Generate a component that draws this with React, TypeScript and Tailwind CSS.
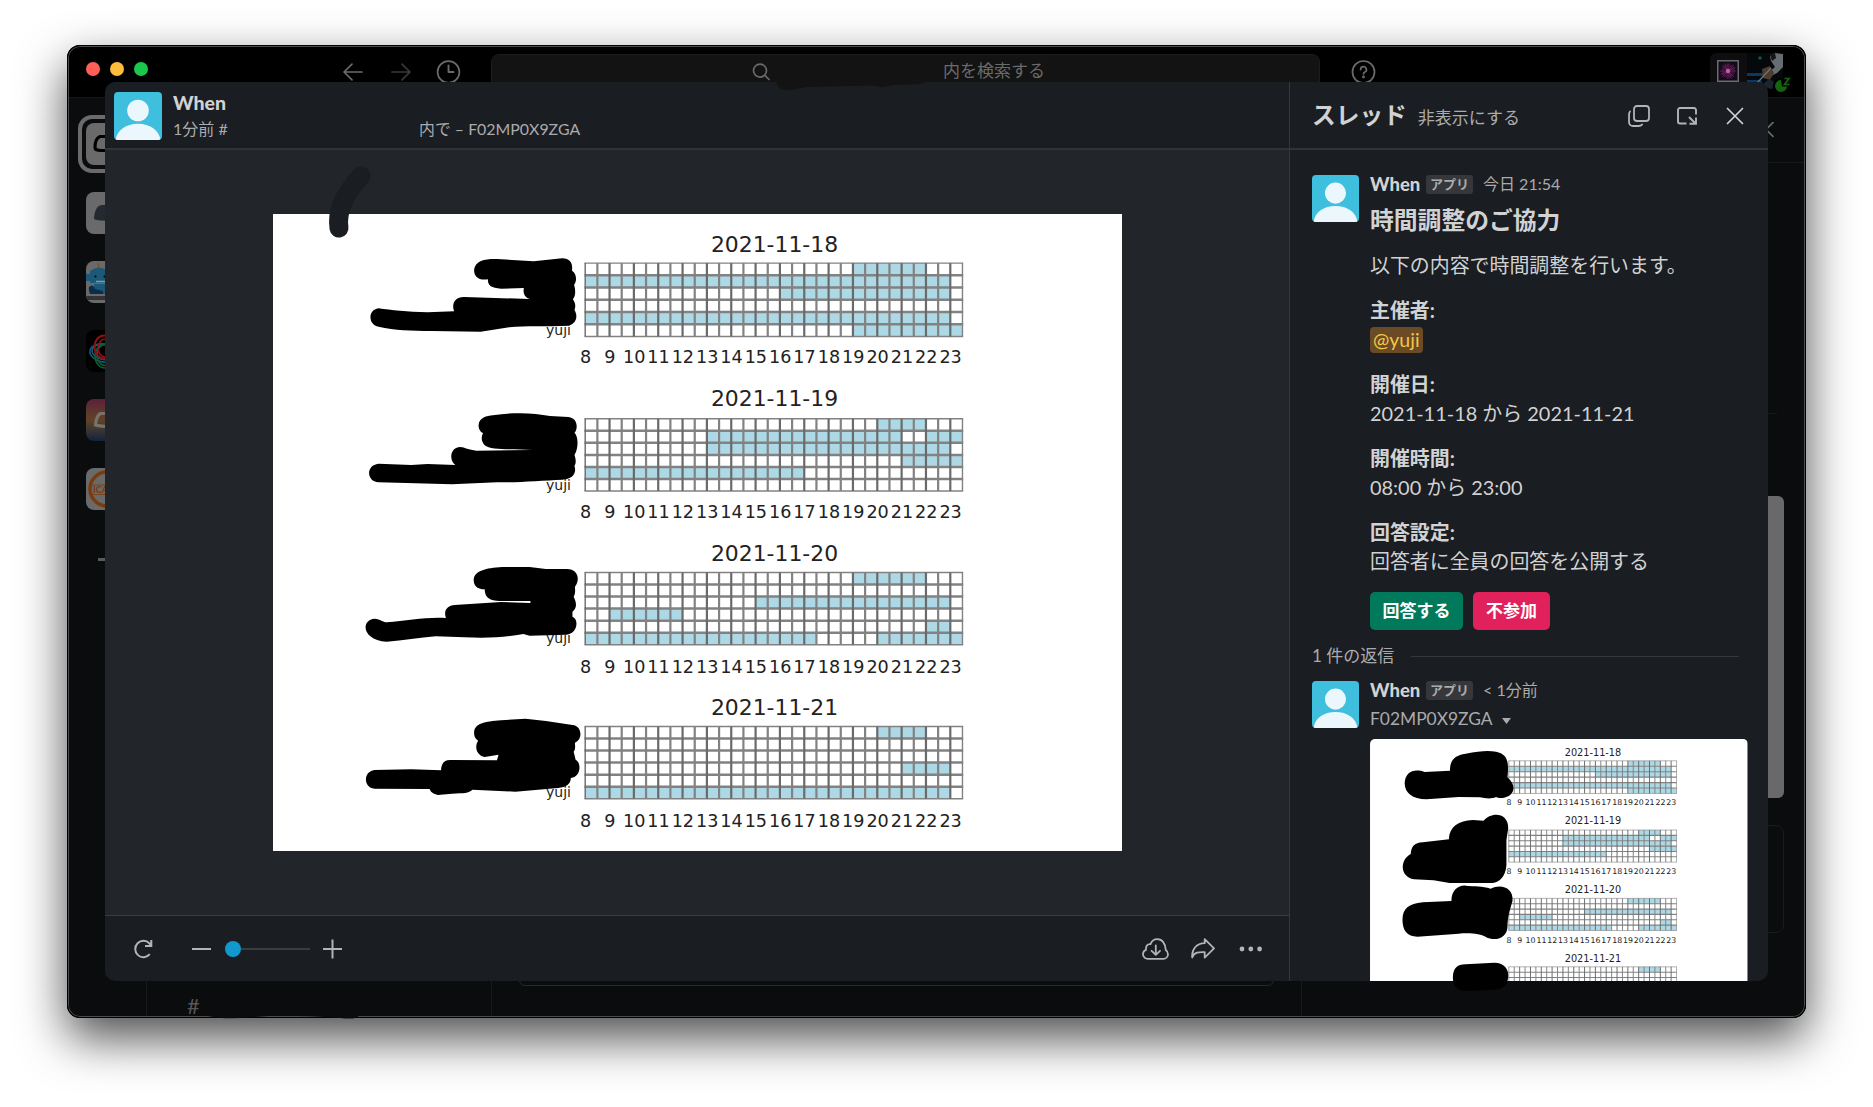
import React from "react";

type Range = [row: number, from: number, to: number];
interface Day {
  date: string;
  top: number;
  height: number;
  title: number;
  ticks: number;
  busy: Range[];
}

const COLS = 31;
const GRID_X = 312.2;
const CELL_W = 12.17;

const days: Day[] = [
  { date: "2021-11-18", top: 49.1, height: 73.4, title: 38.3, ticks: 149.3, busy: [[0, 22, 28], [1, 0, 30], [2, 16, 30], [4, 0, 30], [5, 22, 31]] },
  { date: "2021-11-19", top: 204.8, height: 72.2, title: 192.1, ticks: 304, busy: [[0, 24, 28], [1, 10, 26], [1, 28, 31], [2, 10, 30], [3, 26, 31], [4, 0, 18]] },
  { date: "2021-11-20", top: 358.5, height: 72.2, title: 347.2, ticks: 458.8, busy: [[0, 22, 28], [2, 14, 30], [3, 2, 8], [4, 28, 30], [5, 0, 19], [5, 24, 31]] },
  { date: "2021-11-21", top: 512.5, height: 72.2, title: 501.4, ticks: 612.8, busy: [[0, 24, 28], [3, 26, 30], [5, 0, 30]] },
];

function ScheduleChart({ className }: { className: string }) {
  const right = GRID_X + COLS * CELL_W;
  return (
    <svg viewBox="0 0 849 637" className={className} fontFamily='"DejaVu Sans", sans-serif'>
      <rect width="849" height="637" fill="#fff" />
      {days.map((d) => {
        const rh = d.height / 6;
        return (
          <g key={d.date}>
            <text x="501.5" y={d.title} fontSize="21.9" textAnchor="middle" fill="#222">{d.date}</text>
            {d.busy.map(([r, a, b], i) => (
              <rect key={i} x={GRID_X + a * CELL_W} y={d.top + r * rh} width={(b - a) * CELL_W} height={rh} fill="#add8e6" />
            ))}
            {Array.from({ length: 7 }, (_, r) => (
              <line key={r} x1={GRID_X - 0.7} x2={right + 0.7} y1={d.top + r * rh} y2={d.top + r * rh} stroke="#828282" strokeWidth={r === 0 || r === 6 ? 1.4 : 2.5} />
            ))}
            {Array.from({ length: COLS + 1 }, (_, c) => (
              <line key={c} x1={GRID_X + c * CELL_W} x2={GRID_X + c * CELL_W} y1={d.top} y2={d.top + d.height} stroke={c % 2 ? "#828282" : "#6a6a6a"} strokeWidth={c === 0 || c === COLS ? 1.4 : 2.2} />
            ))}
            <text x="298" y={d.top + d.height - 1.4} fontSize="14" textAnchor="end" fill="#222">yuji</text>
            {Array.from({ length: 16 }, (_, t) => (
              <text key={t} x={GRID_X + 0.3 + t * 2 * CELL_W} y={d.ticks} fontSize="17.6" textAnchor="middle" fill="#222">{t + 8}</text>
            ))}
          </g>
        );
      })}
    </svg>
  );
}

function Avatar({ className }: { className: string }) {
  return (
    <svg viewBox="0 0 48 48" className={className}>
      <rect width="48" height="48" fill="#3ebfde" />
      <circle cx="24" cy="18.5" r="10.8" fill="#ebf7fd" />
      <path d="M1.5 48C3 38 12 31.7 24 31.7S45 38 46.5 48Z" fill="#ebf7fd" />
    </svg>
  );
}

function TopBar() {
  return (
    <div className="flex h-[53px] shrink-0 items-start border-b border-[#17171a] bg-black pl-[19px]">
      <div className="mt-[17px] flex gap-[10px]">
        <i className="size-[14px] rounded-full bg-[#ff5f57]" />
        <i className="size-[14px] rounded-full bg-[#febc3a]" />
        <i className="size-[14px] rounded-full bg-[#1cc84b]" />
      </div>
      <svg className="mt-[15px] ml-[194px] h-6 w-[120px]" viewBox="0 0 120 24" fill="none" strokeWidth="1.7" strokeLinecap="round" strokeLinejoin="round">
        <path d="M10 4.2 2 12l8 7.8M2.4 12H20" stroke="#6b6b6b" />
        <path d="m60 4.2 8 7.8-8 7.8M67.600 12H50" stroke="#3a3a3a" />
        <circle cx="106.500" cy="12" r="10.900" stroke="#6b6b6b" />
        <path d="M106.500 5.500V12h5" stroke="#6b6b6b" strokeWidth="1.900" />
      </svg>
      <div className="mt-[9px] ml-[29px] flex h-[36px] w-[829px] rounded-lg border border-[#1d1d1d] bg-[#131313] pl-[260px] text-[17px] leading-[34px] text-[#6a6a6a]">
        <svg className="mt-[8px] size-[18px]" viewBox="0 0 18 18" fill="none" stroke="#6a6a6a" strokeWidth="1.700" strokeLinecap="round">
          <circle cx="8" cy="7.600" r="6.500" />
          <path d="m13 12.500 4 4" />
        </svg>
        <span className="mt-[-1px] ml-[173px]">内を検索する</span>
      </div>
      <svg className="mt-[15px] ml-[31px] size-[25px]" viewBox="0 0 25 25" fill="none" stroke="#6b6b6b" strokeWidth="1.700" strokeLinecap="round">
        <circle cx="12.500" cy="12" r="11" />
        <path d="M9.600 9.600a2.900 2.900 0 1 1 4.300 2.500c-.9.500-1.400.9-1.400 1.900" />
        <circle cx="12.500" cy="17" r=".6" fill="#6b6b6b" />
      </svg>
      <div className="mt-[8px] ml-[334px] flex h-[37px] w-[37px] rounded-l-md bg-[#0e0e0e] pt-[7px] pl-[7px]">
        <svg className="size-[22px]" viewBox="0 0 22 22">
          <rect x=".75" y=".75" width="20.500" height="20.500" fill="#150a1c" stroke="#6b6b6b" strokeWidth="1.500" />
          <circle cx="11" cy="11" r="7" fill="#3a1138" />
          <path d="M11 3v16M3 11h16M5 5l12 12M17 5 5 17M7.500 3.500l7 15M3.500 14.500l15-7" stroke="#7d2a66" strokeWidth=".6" />
          <circle cx="11" cy="11" r="2.200" fill="#c0609a" />
        </svg>
      </div>
      <svg className="mt-[8px] h-[40px] w-[44px]" viewBox="0 0 44 40">
        <rect width="36" height="36" fill="#05090c" />
        <path d="M0 20h16v3H0zM0 27h14l4 9H0z" fill="#0a3a63" />
        <circle cx="13" cy="5" r="1.800" fill="#0d5a40" />
        <path d="M23 3l5-3 8 1v13l-6 6-6 3-3-3 7-6-4-6z" fill="#676c70" />
        <path d="M23 1l5-1 1 5-4 3z" fill="#15161a" />
        <path d="M15 16l8-3 4 7-4 7-7-2z" fill="#4c3d31" />
        <path d="M10 30 24 15" stroke="#77736a" strokeWidth="1.200" />
        <path d="M14 33l8-7 5 3-2 7z" fill="#1b2430" />
        <circle cx="34" cy="33" r="8" fill="#000" />
        <path d="M34 27a6 6 0 1 0 6 6.500H35Z" fill="#17630f" />
        <path d="M37.500 25.500h4.500l-4.500 6H42.500" fill="none" stroke="#17630f" strokeWidth="1.700" />
      </svg>
    </div>
  );
}

function WorkspaceRail() {
  return (
    <div className="flex w-[80px] shrink-0 flex-col border-r border-[#18191b] pt-[17px] pl-[11px]">
      <div className="h-[58px] w-[58px] rounded-[14px] border-4 border-[#6b6b6b] p-1">
        <svg className="size-[42px] rounded-lg" viewBox="0 0 42 42">
          <rect width="42" height="42" fill="#6a6a6a" />
          <path d="M26 13.500H14c-4 1.500-5 6-5 11 0 3 3 3 6 3h12" fill="none" stroke="#000" strokeWidth="3.200" />
        </svg>
      </div>
      <svg className="mt-[19px] ml-2 size-[42px] rounded-lg" viewBox="0 0 42 42">
        <rect width="42" height="42" fill="#6a6a6a" />
        <path d="M42 13H16c-6 0-8 9-8 14 4 2 14 2 34 2Z" fill="#252a31" />
      </svg>
      <svg className="mt-[27px] ml-2 size-[42px] rounded-lg" viewBox="0 0 42 42">
        <rect width="42" height="42" fill="#6a6a6a" />
        <rect y="35" width="42" height="4" fill="#333" />
        <path d="M11.500 2h2v5h-2z" fill="#7b5b15" />
        <path d="M4 10q9-7 18 0v12H4zM0 13h4v7H0zM8 23h14v10H8z" fill="#1c5878" />
        <path d="M3 26q4-4 6 2l8 2v3H4q-2-4-1-7z" fill="#0c2c49" />
        <circle cx="9.500" cy="15.500" r="1" fill="#000" />
        <circle cx="18.500" cy="15.500" r="1" fill="#000" />
        <path d="M10 20.500h9" stroke="#8a9aa2" strokeWidth="1.500" />
      </svg>
      <svg className="mt-[27px] ml-2 size-[42px] rounded-lg" viewBox="0 0 42 42" fill="none" strokeWidth="1.600">
        <rect width="42" height="42" fill="#000" />
        <ellipse cx="18" cy="23" rx="14" ry="9" stroke="#155878" transform="rotate(10 18 22)" />
        <ellipse cx="18" cy="22" rx="12" ry="7.500" stroke="#155878" transform="rotate(10 18 22)" />
        <ellipse cx="19" cy="26" rx="10" ry="12" stroke="#0f5d35" />
        <ellipse cx="19" cy="25" rx="8" ry="10.500" stroke="#0f5d35" />
        <ellipse cx="18" cy="17" rx="9.500" ry="11.500" stroke="#8c1216" strokeWidth="2" />
        <ellipse cx="19" cy="18" rx="7" ry="9" stroke="#8c1216" />
      </svg>
      <div className="mt-[27px] ml-2 size-[42px] rounded-lg bg-linear-to-b from-[#5c2038] via-[#604326] to-[#12233a]">
        <svg className="size-[42px]" viewBox="0 0 42 42"><path d="M26 14.500H14.500C11 16 10 21 9.500 26q4 1.500 18 1.500" fill="none" stroke="#77726a" strokeWidth="3.200" /></svg>
      </div>
      <svg className="mt-[27px] ml-2 size-[42px] rounded-lg" viewBox="0 0 42 42">
        <rect width="42" height="42" fill="#6a6a6a" />
        <circle cx="21" cy="21" r="17" fill="none" stroke="#793c0f" strokeWidth="3.400" />
        <path d="M5 17h30M5 26.500h30" stroke="#793c0f" strokeWidth=".8" />
        <text x="7" y="25" fontSize="9" fontWeight="900" fill="#793c0f">ICA</text>
      </svg>
      <div className="mt-[48px] ml-5 h-[3px] w-5 bg-[#5b5b5b]" />
    </div>
  );
}

function Backdrop() {
  return (
    <div className="flex min-h-0 flex-1 bg-[#0b0c0e]">
      <WorkspaceRail />
      <div className="flex w-[345px] shrink-0 flex-col justify-end border-r border-[#18191b] pl-[40px] text-[22px] leading-[24px] text-[#555658]">
        <span>#</span>
      </div>
      <div className="flex flex-1 flex-col justify-end pr-[27px] pb-[32px] pl-[27px]">
        <div className="h-20 rounded-md border border-[#27282a]" />
      </div>
      <div className="flex w-[505px] shrink-0 flex-col border-l border-[#18191b]">
        <div className="flex h-[65px] shrink-0 justify-end border-b border-[#18191b] pr-[32px]">
          <svg className="mt-[24px] h-[16px] w-[16px]" viewBox="0 0 16 16" stroke="#6a6a6a" strokeWidth="1.700"><path d="M15.500 0 .5 15M.5 0l15 15" /></svg>
        </div>
        <div className="mt-[250px] mr-[29px] border-t border-[#18191b]" />
        <div className="mt-[82px] mr-[22px] ml-auto h-[302px] w-6 rounded-md bg-[#696969]" />
        <div className="mt-[27px] mr-[22px] ml-6 h-[108px] rounded-lg border border-[#1b1c1e]" />
      </div>
    </div>
  );
}

function Viewer() {
  return (
    <section className="flex w-[1185px] shrink-0 flex-col border-r border-[#35373b]">
      <header className="flex h-[68px] shrink-0 gap-[11px] border-b-2 border-[#313337] pt-[10px] pl-[9px]">
        <Avatar className="size-[48px] rounded" />
        <div className="flex flex-col">
          <b className="mt-[-2px] mb-[2px] h-[25px] text-[19.500px] leading-[25px] font-black">When</b>
          <div className="flex h-6 text-[16px] leading-6 text-[#ababad]">
            <span className="w-[246px]">1分前 #</span>
            <span className="text-[15.900px]">内で – F02MP0X9ZGA</span>
          </div>
        </div>
      </header>
      <div className="min-h-0 flex-1 bg-[#222529] pt-[64px] pl-[168px]">
        <ScheduleChart className="h-[637px] w-[849px]" />
      </div>
      <footer className="flex h-[66px] shrink-0 items-center border-t border-[#3a3c40] pl-[28px]">
        <svg className="h-5 w-[21px]" viewBox="1 0 21 20" fill="none" stroke="#b3b4b5" strokeWidth="2">
          <path d="M17.800 15.200A8.200 8.200 0 1 1 17.500 4.500L18.500 6M19.300 1v6h-6.300" />
        </svg>
        <svg className="ml-[38px] h-5 w-[19px]" viewBox="0 0 19 20" stroke="#b3b4b5" strokeWidth="2"><path d="M0 10h19" /></svg>
        <div className="ml-[14px] flex w-[85px] items-center">
          <i className="size-4 shrink-0 rounded-full bg-[#1199cf]" />
          <i className="h-[2px] flex-1 bg-[#3a3c40]" />
        </div>
        <svg className="ml-[13px] h-5 w-[19px]" viewBox="0 0 19 20" stroke="#b3b4b5" strokeWidth="2"><path d="M0 10h19M9.500 .5v19" /></svg>
        <svg className="ml-[800px] h-[22px] w-[27px]" viewBox="0 0 27 22" fill="none" stroke="#b3b4b5" strokeWidth="1.800" strokeLinecap="round" strokeLinejoin="round">
          <path d="M6 20.800h15.500a4.500 4.500 0 0 0 4.500-4.500c0-2-1-3.400-2.200-4.300C23.500 5.500 20 1.200 15.500 1.200c-3.300 0-6 2-7 5C5.300 5.700 3.500 8.500 4 11.800 2.200 12.500 1 14 1 16.200a4.700 4.700 0 0 0 5 4.600ZM13.800 7.500v9M9.600 12.800l4.200 4 4.200-4" />
        </svg>
        <svg className="ml-[22px] h-[21px] w-6" viewBox="0 0 24 21" fill="none" stroke="#b3b4b5" strokeWidth="1.800" strokeLinejoin="round">
          <path d="M1.200 19.500C.6 11 5.500 5.500 13.700 5.200V1.200l9.300 9.200-9.300 9.200v-5.400C8 14 3.300 14 1.200 19.500Z" />
        </svg>
        <svg className="ml-[24px] h-[6px] w-[24px]" viewBox="0 0 24 6" fill="#b3b4b5"><circle cx="3" cy="3" r="2.400" /><circle cx="11.800" cy="3" r="2.400" /><circle cx="20.600" cy="3" r="2.400" /></svg>
      </footer>
    </section>
  );
}

function NameRow({ time }: { time: string }) {
  return (
    <div className="flex h-6 items-center leading-6">
      <b className="w-[50px] text-[18.500px] font-black">When</b>
      <span className="ml-[6px] h-[19px] w-[47px] rounded-[3px] bg-[#35373b] text-center text-[13px] leading-[18px] font-bold text-[#ababad]">アプリ</span>
      <span className="ml-[10px] text-[16px] text-[#ababad]">{time}</span>
    </div>
  );
}

function Field({ label, children }: { label: string; children: React.ReactNode }) {
  return (
    <div className="mb-4 h-[58px] leading-[29px]">
      <b className="block font-bold">{label}</b>
      <div>{children}</div>
    </div>
  );
}

function Thread() {
  return (
    <section className="flex min-w-0 flex-1 flex-col text-[#d1d2d3]">
      <header className="flex h-[68px] shrink-0 items-center border-b-2 border-[#313337] pt-[2px] pr-[24px] pl-[22px]">
        <h2 className="text-[23.700px] font-bold">スレッド</h2>
        <span className="mt-[4px] ml-[11px] flex-1 text-[17px] text-[#ababad]">非表示にする</span>
        <svg className="h-[22px] w-[22px]" viewBox="0 0 22 22" fill="none" stroke="#b3b4b5" strokeWidth="1.800" strokeLinecap="round">
          <rect x="6" y="1" width="15" height="15" rx="3" />
          <path d="M2 6.500C1.200 7.500 1 8.500 1 10v7a4 4 0 0 0 4 4h5.500c2 0 3-.6 3.600-1.500" />
        </svg>
        <svg className="ml-[27px] h-[18px] w-5" viewBox="0 0 20 18" fill="none" stroke="#b3b4b5" strokeWidth="1.900">
          <path d="M19 7.500V3a2 2 0 0 0-2-2H3a2 2 0 0 0-2 2v11.500a2 2 0 0 0 2 2h6.500M12 10l6.500 6.500M19 10.500v6.300h-6.500" />
        </svg>
        <svg className="ml-[29px] h-[18px] w-[18px]" viewBox="0 0 18 18" fill="none" stroke="#d1d2d3" strokeWidth="1.700" strokeLinecap="round"><path d="m1.500 1.500 15 15M16.500 1.500l-15 15" /></svg>
      </header>
      <div className="min-h-0 flex-1 overflow-hidden pt-[22px] pl-[22px] text-[19.930px]">
        <article className="flex gap-[11px]">
          <Avatar className="mt-[3px] size-[47px] shrink-0 rounded" />
          <div>
            <NameRow time="今日 21:54" />
            <h3 className="mt-[9px] h-[30px] text-[23.800px] leading-[30px] font-bold">時間調整のご協力</h3>
            <p className="mt-4 mb-[16px] h-[29px] leading-[29px]">以下の内容で時間調整を行います。</p>
            <Field label="主催者:">
              <span className="inline-block h-[26px] rounded-[4px] bg-[#6b4a26] px-[3px] text-[19.500px] leading-[26px] text-[#f2c744]">@yuji</span>
            </Field>
            <Field label="開催日:">2021-11-18 から 2021-11-21</Field>
            <Field label="開催時間:">08:00 から 23:00</Field>
            <Field label="回答設定:">回答者に全員の回答を公開する</Field>
            <div className="flex gap-[10px] text-[17px] font-bold text-white">
              <button className="h-[38px] w-[93px] rounded-[5px] bg-[#007a5a]">回答する</button>
              <button className="h-[38px] w-[77px] rounded-[5px] bg-[#e0215b]">不参加</button>
            </div>
          </div>
        </article>
        <div className="mt-[14px] mr-[29px] flex h-6 items-center gap-[17px] text-[17px] leading-6 text-[#ababad]">
          <span>1 件の返信</span>
          <i className="h-px flex-1 bg-[#35373b]" />
        </div>
        <article className="mt-[10px] flex gap-[11px]">
          <Avatar className="mt-[3px] size-[47px] shrink-0 rounded" />
          <div>
            <NameRow time="< 1分前" />
            <div className="mt-[5px] flex h-6 items-center text-[17.400px] leading-6 text-[#ababad]">
              F02MP0X9ZGA
              <svg className="mt-[4px] ml-[9px] h-[6px] w-[9px]" viewBox="0 0 9 6"><path d="M0 0h9L4.500 6Z" fill="#ababad" /></svg>
            </div>
            <ScheduleChart className="mt-2 h-[283.200px] w-[377.500px] rounded-[5px]" />
          </div>
        </article>
      </div>
    </section>
  );
}

/* Hand-drawn redactions laid over the window. */
function Redactions() {
  return (
    <svg className="pointer-events-none absolute inset-0 h-[1107px] w-[1873px]" viewBox="0 0 1873 1107">
      <path d="M361 176C348 190 336 208 339 228" fill="none" stroke="#1a1d21" strokeWidth="19" strokeLinecap="round" />
      <path d="M776 81C777 88 782 91 790 90L806 87 872 85.500 882 87 895 85 920 84 928 81Z" fill="#131313" />
      <path d="M208 1016Q225 1020 255 1017T340 1018Q358 1020 359 1015Z" fill="#0b0c0e" />
      <g transform="translate(350 210) scale(.40816 .33333)">
        <path d="M304 180C306 150 335 146 360 147L450 154 520 145C540 146 546 160 544 182 556 190 556 215 549 224 553 240 553 260 546 268 553 280 553 290 550 300 558 315 557 340 535 347 480 350 430 346 390 352L320 365 200 363C150 362 110 362 70 350 45 345 42 300 70 295 100 300 140 306 190 307L255 304C248 280 258 260 280 261L440 267C425 260 424 245 426 234L370 236C345 234 337 225 338 208 315 212 304 200 304 180Z" />
        <path d="M315 645C317 622 335 618 350 616 400 606 450 608 490 618L535 621C560 624 558 660 550 668 560 680 560 715 550 735 554 750 554 760 550 768 556 790 545 808 520 809 470 812 400 818 360 817L250 823 70 817C40 815 38 765 70 761L150 765 190 762 258 765C242 750 245 712 270 711 282 712 290 720 310 722L447 720C400 716 345 722 330 706 320 692 322 680 326 669 318 665 315 655 315 645Z" />
      </g>
      <g transform="translate(350 520) scale(.40816 .33333)">
        <path d="M303 180C304 150 340 142 380 141L440 141 480 147 530 147C560 146 564 180 551 200 552 212 552 222 548 230 556 250 556 265 545 275L545 290C560 295 560 340 530 344L440 347 425 342C380 352 340 355 280 352L210 349C170 352 130 363 90 365 30 362 25 300 60 296 75 298 80 306 90 307 140 302 190 290 235 294 228 270 240 256 256 255L370 246 442 249 442 243 370 243C345 244 330 235 330 208 310 208 303 195 303 180Z" />
        <path d="M304 638C305 610 330 605 370 601L430 596 480 603 545 615C570 618 570 660 551 668 552 680 552 690 548 695L553 720C566 725 568 770 541 774 541 792 530 802 510 804L405 815 300 809C290 820 280 819 250 821L215 825C200 820 198 815 195 807L60 806C32 803 32 754 60 750L150 748 223 751C224 730 230 721 245 720L360 721 364 704 330 711C310 706 304 680 314 662 306 655 304 648 304 638Z" />
      </g>
      <g transform="translate(1280 700) scale(.35714 .33333)">
        <path d="M476 210C476 180 490 165 520 161 560 152 585 151 605 155 635 162 642 180 637 232 650 245 656 260 653 270 650 290 620 300 605 291 590 298 575 295 560 292L500 291 410 298C370 297 350 280 349 250 351 215 375 205 405 216L476 212Z" />
        <path d="M473 415C475 380 500 362 540 360L570 362C590 335 640 335 639 385L634 420 634 495C632 530 615 546 595 549L475 549 430 541 375 538C335 530 335 480 366 462 368 440 375 428 400 427L473 418Z" />
        <path d="M480 603C480 570 500 555 520 557 545 560 565 557 590 566 620 550 655 565 651 603 645 625 637 650 637 680 636 710 610 725 580 713 560 700 530 698 500 701L385 710C355 710 343 690 343 660 343 625 360 612 400 607L480 603Z" />
        <path d="M484 832C485 805 495 793 520 793L600 788C630 788 641 810 639 830 637 855 625 868 600 869L525 873C495 873 484 858 484 832Z" />
      </g>
    </svg>
  );
}

export default function App() {
  return (
    <div className={`relative h-[1107px] w-[1873px] overflow-hidden bg-white pt-[45px] pl-[67px] font-['Lato','Noto_Sans_CJK_JP',sans-serif]`}>
      <div className="relative flex h-[973px] w-[1739px] flex-col overflow-hidden rounded-[13px] bg-black shadow-[0_20px_48px_rgba(0,0,0,0.7)]">
        <TopBar />
        <Backdrop />
        <div className="absolute inset-0 rounded-[13px] border border-black shadow-[inset_0_0_0_1px_#4b4c4d]" />
        <main className="absolute top-[37px] left-[38px] flex h-[899px] w-[1663px] overflow-hidden rounded-[10px] bg-[#1a1d21] text-[#d1d2d3]">
          <Viewer />
          <Thread />
        </main>
      </div>
      <Redactions />
    </div>
  );
}
